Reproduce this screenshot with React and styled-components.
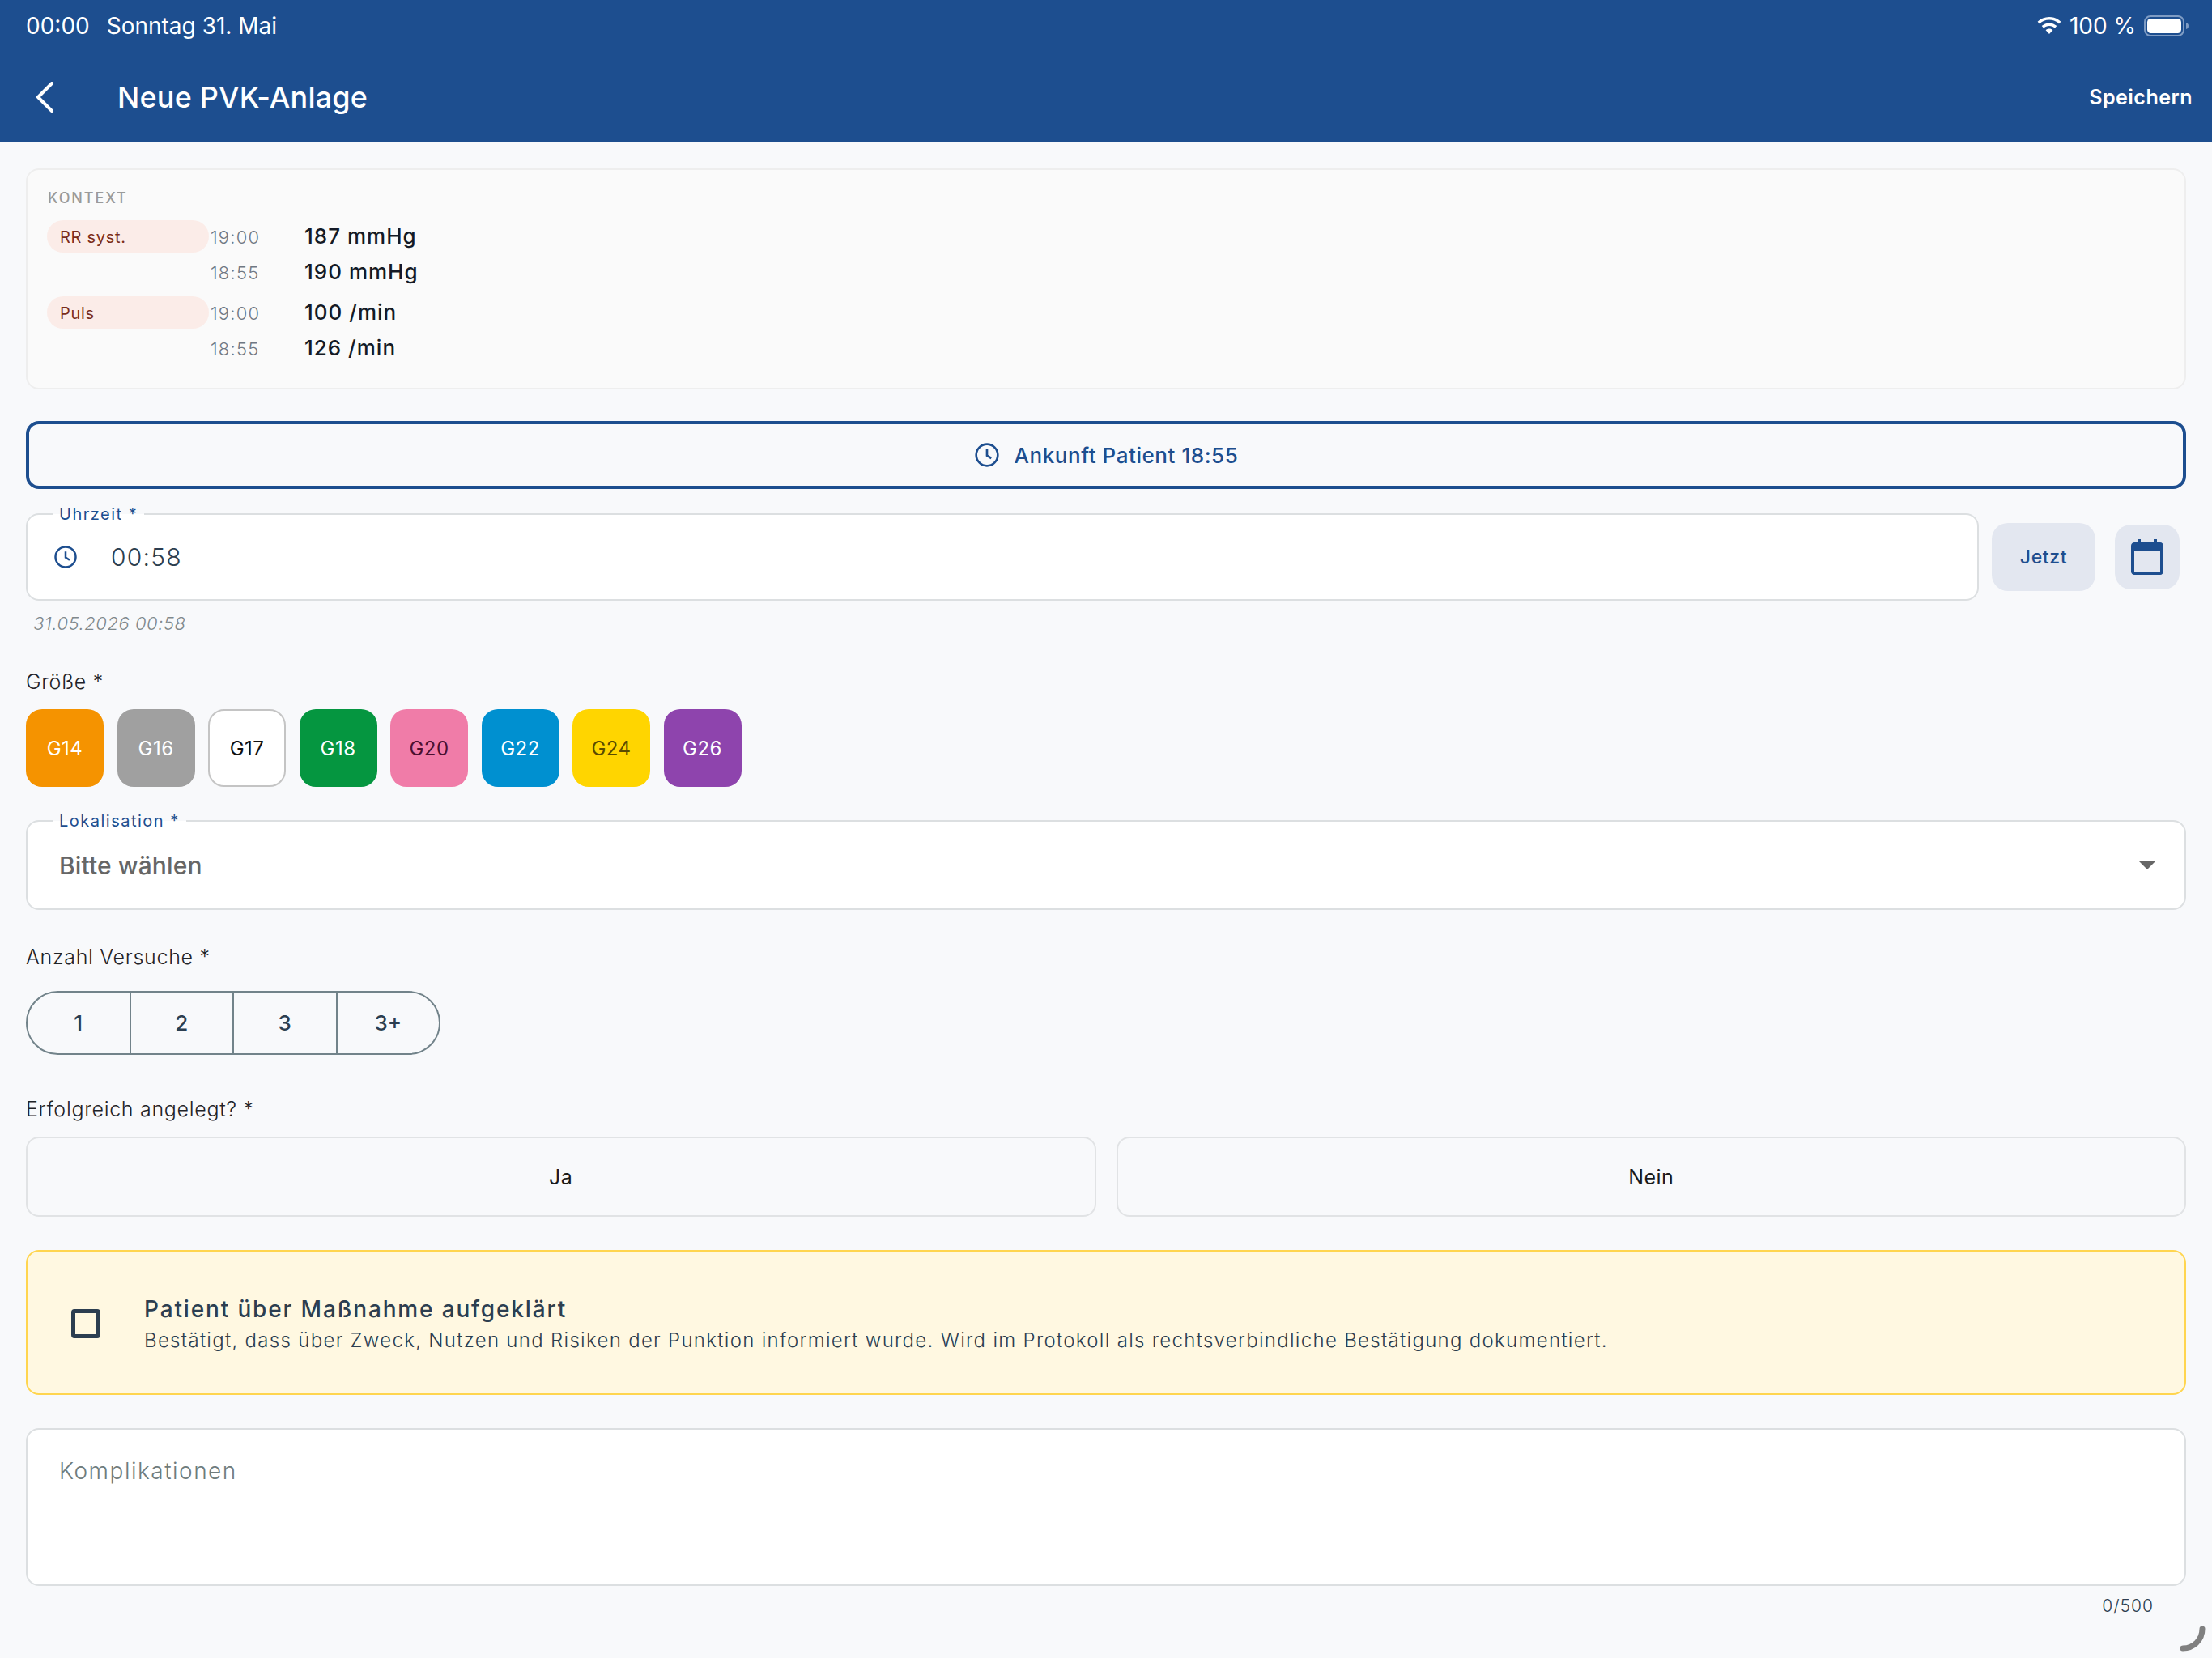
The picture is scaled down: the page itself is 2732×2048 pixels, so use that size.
import React from "react";
import styled, { createGlobalStyle } from "styled-components";

const GAUGES = [
  { name: "G14", bg: "#f59300", fg: "#ffffff" },
  { name: "G16", bg: "#a0a0a0", fg: "#ffffff" },
  { name: "G17", bg: "#ffffff", fg: "#111111", border: "#c4c4c4" },
  { name: "G18", bg: "#059640", fg: "#ffffff" },
  { name: "G20", bg: "#f07ca8", fg: "#4a1030" },
  { name: "G22", bg: "#0090d0", fg: "#ffffff" },
  { name: "G24", bg: "#ffd500", fg: "#5a4a00" },
  { name: "G26", bg: "#8e44ad", fg: "#ffffff" },
];

const VITALS = [
  {
    label: "RR syst.",
    rows: [
      ["19:00", "187 mmHg"],
      ["18:55", "190 mmHg"],
    ],
  },
  {
    label: "Puls",
    rows: [
      ["19:00", "100 /min"],
      ["18:55", "126 /min"],
    ],
  },
];

function ClockIcon({ size }) {
  return (
    <svg width={size} height={size} viewBox="0 0 24 24" fill="none" stroke="#1d4e8f" strokeWidth="2">
      <circle cx="12" cy="12" r="10" />
      <path d="M12 6.5V12.5L16 15" />
    </svg>
  );
}

export default function App() {
  return (
    <Page>
      <GlobalStyle />
      <Header>
        <StatusBar>
          <StatusGroup>
            <span>00:00</span>
            <span>Sonntag 31. Mai</span>
          </StatusGroup>
          <StatusRight>
            <svg width="30" height="22" viewBox="0 0 30 22" fill="#fff">
              <path d="M15 0C9.4 0 4.4 2.2.6 5.8L3 8.4C6.1 5.4 10.4 3.6 15 3.6s8.900 1.800 12 4.800l2.400-2.600C25.600 2.200 20.600 0 15 0z" />
              <path d="M15 7.400c-3.600 0-6.900 1.400-9.300 3.700l2.500 2.600c1.800-1.700 4.200-2.700 6.800-2.700s5 1 6.800 2.700l2.500-2.600c-2.400-2.300-5.700-3.700-9.300-3.700z" />
              <path d="M15 14.600c-1.700 0-3.200.7-4.400 1.700L15 21l4.400-4.700c-1.200-1-2.700-1.700-4.400-1.700z" />
            </svg>
            <span>100 %</span>
            <svg width="56" height="26" viewBox="0 0 56 26">
              <rect x="1" y="1" width="48" height="24" rx="7" fill="none" stroke="#7f9cc4" strokeWidth="2" />
              <rect x="4" y="4" width="42" height="18" rx="4.500" fill="#fff" />
              <path d="M52 9c2 .5 3 2 3 4s-1 3.500-3 4z" fill="#7f9cc4" />
            </svg>
          </StatusRight>
        </StatusBar>
        <TitleBar>
          <BackButton>
            <svg width="26" height="38" viewBox="0 0 26 38" fill="none" stroke="#fff" strokeWidth="4" strokeLinecap="round" strokeLinejoin="round">
              <path d="M21 2L4 19L21 36" />
            </svg>
          </BackButton>
          <Title>Neue PVK-Anlage</Title>
          <SaveAction>Speichern</SaveAction>
        </TitleBar>
      </Header>

      <Content>
        <ContextCard>
          <ContextHeading>KONTEXT</ContextHeading>
          {VITALS.map((vital) => (
            <VitalGroup key={vital.label}>
              <VitalChip>{vital.label}</VitalChip>
              <VitalRows>
                {vital.rows.map(([time, value]) => (
                  <VitalRow key={time}>
                    <VitalTime>{time}</VitalTime>
                    <VitalValue>{value}</VitalValue>
                  </VitalRow>
                ))}
              </VitalRows>
            </VitalGroup>
          ))}
        </ContextCard>

        <ArrivalButton>
          <ClockIcon size={32} />
          <span>Ankunft Patient 18:55</span>
        </ArrivalButton>

        <TimeRow>
          <TimeField>
            <FloatingLabel>Uhrzeit *</FloatingLabel>
            <ClockIcon size={30} />
            <TimeValue>00:58</TimeValue>
          </TimeField>
          <NowButton>Jetzt</NowButton>
          <CalendarButton>
            <svg width="40" height="44" viewBox="0 0 40 44" fill="#1d4e8f">
              <path d="M8 0h4v4h16V0h4v4h4c2.200 0 4 1.800 4 4v32c0 2.200-1.800 4-4 4H4c-2.200 0-4-1.800-4-4V8c0-2.200 1.800-4 4-4h4zM4 14v26h32V14z" />
            </svg>
          </CalendarButton>
        </TimeRow>
        <TimeHint>31.05.2026 00:58</TimeHint>

        <SectionLabel $top={41}>Größe *</SectionLabel>
        <GaugeRow>
          {GAUGES.map((gauge) => (
            <GaugeChip key={gauge.name} $bg={gauge.bg} $fg={gauge.fg} $border={gauge.border}>
              {gauge.name}
            </GaugeChip>
          ))}
        </GaugeRow>

        <SelectField>
          <FloatingLabel>Lokalisation *</FloatingLabel>
          <SelectValue>Bitte wählen</SelectValue>
          <SelectArrow />
        </SelectField>

        <SectionLabel $top={41}>Anzahl Versuche *</SectionLabel>
        <Segments>
          {["1", "2", "3", "3+"].map((count) => (
            <Segment key={count}>{count}</Segment>
          ))}
        </Segments>

        <SectionLabel $top={50}>Erfolgreich angelegt? *</SectionLabel>
        <ChoiceRow>
          <ChoiceButton>Ja</ChoiceButton>
          <ChoiceButton>Nein</ChoiceButton>
        </ChoiceRow>

        <ConsentCard>
          <CheckBox />
          <ConsentText>
            <ConsentTitle>Patient über Maßnahme aufgeklärt</ConsentTitle>
            <ConsentBody>
              Bestätigt, dass über Zweck, Nutzen und Risiken der Punktion informiert wurde. Wird im
              Protokoll als rechtsverbindliche Bestätigung dokumentiert.
            </ConsentBody>
          </ConsentText>
        </ConsentCard>

        <TextArea>Komplikationen</TextArea>
        <Counter>0/500</Counter>
      </Content>

      <ResizeHandle>
        <svg width="32" height="32" viewBox="0 0 32 32" fill="none" stroke="#808080" strokeWidth="7" strokeLinecap="round">
          <path d="M28 4C28 17 18 28 4 28" />
        </svg>
      </ResizeHandle>
    </Page>
  );
}

const GlobalStyle = createGlobalStyle`
  html, body {
    margin: 0;
    padding: 0;
    background: #f8f9fb;
  }
  * {
    box-sizing: border-box;
  }
`;

const Page = styled.div`
  position: relative;
  width: 2732px;
  height: 2048px;
  overflow: hidden;
  background: #f8f9fb;
  font-family: Inter, "Noto Sans", sans-serif;
  color: #1a1a1a;
`;

const Header = styled.header`
  height: 176px;
  background: #1d4e8f;
  color: #fff;
`;

const StatusBar = styled.div`
  height: 64px;
  padding: 0 28px 0 32px;
  display: flex;
  align-items: center;
  justify-content: space-between;
  font-size: 28px;
`;

const StatusGroup = styled.div`
  display: flex;
  gap: 21px;
`;

const StatusRight = styled.div`
  display: flex;
  align-items: center;
  gap: 10px;
`;

const TitleBar = styled.div`
  height: 112px;
  padding: 0 24px 0 43px;
  display: flex;
  align-items: center;
`;

const BackButton = styled.div`
  width: 102px;
  display: flex;
  align-items: center;
`;

const Title = styled.h1`
  margin: 0;
  flex: 1;
  font-size: 36px;
  font-weight: 500;
  letter-spacing: 0.2px;
`;

const SaveAction = styled.div`
  font-size: 25px;
  font-weight: 600;
  letter-spacing: 0.5px;
`;

const Content = styled.main`
  padding: 32px 32px 0;
`;

const ContextCard = styled.section`
  height: 273px;
  padding: 24px 24px 0;
  background: #fafafa;
  border: 2px solid #eeeeee;
  border-radius: 16px;
`;

const ContextHeading = styled.div`
  padding-left: 1px;
  font-size: 18px;
  font-weight: 500;
  line-height: 22px;
  letter-spacing: 1.9px;
  color: #9a9a9a;
  margin-bottom: 16px;
`;

const VitalGroup = styled.div`
  display: flex;
  margin-bottom: 9px;
`;

const VitalChip = styled.div`
  width: 200px;
  height: 40px;
  padding: 2px 16px 0;
  display: flex;
  align-items: center;
  border-radius: 20px;
  background: #fbece8;
  color: #7b2d1a;
  font-size: 20px;
  letter-spacing: 0.7px;
`;

const VitalRows = styled.div`
  display: flex;
  flex-direction: column;
  margin-top: -3px;
`;

const VitalRow = styled.div`
  display: flex;
  align-items: center;
  height: 44px;
`;

const VitalTime = styled.span`
  width: 118px;
  padding-left: 2px;
  margin-top: 4px;
  font-size: 22px;
  font-weight: 300;
  color: #6f7884;
  letter-spacing: 1.2px;
`;

const VitalValue = styled.span`
  font-size: 26px;
  font-weight: 500;
  color: #141a26;
  letter-spacing: 1px;
`;

const ArrivalButton = styled.div`
  margin-top: 39px;
  height: 84px;
  display: flex;
  align-items: center;
  justify-content: center;
  gap: 18px;
  border: 4px solid #1d4e8f;
  border-radius: 16px;
  color: #1d4e8f;
  font-size: 26px;
  font-weight: 500;
  letter-spacing: 0.55px;
`;

const TimeRow = styled.div`
  margin-top: 30px;
  display: flex;
  align-items: center;
`;

const fieldBox = `
  position: relative;
  display: flex;
  align-items: center;
  background: #fff;
  border: 2px solid #dcdfe1;
  border-radius: 16px;
`;

const TimeField = styled.div`
  ${fieldBox}
  width: 2412px;
  height: 108px;
  padding-left: 32px;
`;

const FloatingLabel = styled.label`
  position: absolute;
  left: 31px;
  top: -13px;
  padding: 0 8px;
  font-size: 20px;
  line-height: 24px;
  letter-spacing: 1.5px;
  color: #1d4e8f;
  background: linear-gradient(#f8f9fb 50%, #fff 50%);
`;

const TimeValue = styled.span`
  margin-left: 41px;
  font-size: 30px;
  font-weight: 300;
  letter-spacing: 1.2px;
  color: #2c3e50;
`;

const NowButton = styled.div`
  margin-left: 16px;
  width: 128px;
  height: 84px;
  display: flex;
  align-items: center;
  justify-content: center;
  border-radius: 20px;
  background: #e3e7f0;
  color: #1d4e8f;
  font-size: 23px;
  font-weight: 500;
  letter-spacing: 0.6px;
`;

const CalendarButton = styled.div`
  margin-left: 24px;
  width: 80px;
  height: 80px;
  display: flex;
  align-items: center;
  justify-content: center;
  border-radius: 20px;
  background: #e3e7f0;
`;

const TimeHint = styled.div`
  margin-top: 14px;
  padding-left: 9px;
  font-size: 22px;
  line-height: 28px;
  font-style: italic;
  font-weight: 300;
  letter-spacing: 0.55px;
  color: #7f888c;
`;

const SectionLabel = styled.div`
  margin-top: ${(p) => p.$top}px;
  font-size: 25px;
  line-height: 34px;
  letter-spacing: 0.7px;
  font-weight: 350;
  color: #1f2328;
`;

const GaugeRow = styled.div`
  margin-top: 17px;
  display: flex;
  gap: 16.5px;
`;

const GaugeChip = styled.div`
  width: 96px;
  height: 96px;
  display: flex;
  align-items: center;
  justify-content: center;
  border-radius: 20px;
  background: ${(p) => p.$bg};
  color: ${(p) => p.$fg};
  border: ${(p) => (p.$border ? `2px solid ${p.$border}` : "none")};
  font-size: 24px;
  font-weight: 400;
  letter-spacing: 0.5px;
`;

const SelectField = styled.div`
  ${fieldBox}
  margin-top: 41px;
  height: 111px;
  padding: 0 36px 0 39px;
  justify-content: space-between;
`;

const SelectValue = styled.span`
  font-size: 30px;
  font-weight: 500;
  letter-spacing: 0.1px;
  color: #666666;
`;

const SelectArrow = styled.span`
  width: 0;
  height: 0;
  border-left: 10px solid transparent;
  border-right: 10px solid transparent;
  border-top: 10px solid #666666;
`;

const Segments = styled.div`
  margin-top: 25px;
  width: 512px;
  height: 79px;
  display: flex;
  border: 2px solid #72838a;
  border-radius: 40px;
`;

const Segment = styled.div`
  flex: 1;
  display: flex;
  align-items: center;
  justify-content: center;
  font-size: 26px;
  font-weight: 500;
  color: #2c3e50;
  & + & {
    border-left: 2px solid #72838a;
  }
`;

const ChoiceRow = styled.div`
  margin-top: 17px;
  display: flex;
  gap: 25px;
`;

const ChoiceButton = styled.div`
  flex: 1;
  height: 99px;
  display: flex;
  align-items: center;
  justify-content: center;
  border: 2px solid #e1e3e5;
  border-radius: 16px;
  font-size: 25px;
  letter-spacing: 0.5px;
  color: #1a1a1a;
`;

const ConsentCard = styled.section`
  margin-top: 41px;
  height: 179px;
  padding: 2px 0 0 54px;
  display: flex;
  align-items: center;
  gap: 54px;
  background: #fff8e1;
  border: 2px solid #ffd54f;
  border-radius: 16px;
`;

const CheckBox = styled.span`
  flex: none;
  width: 36px;
  height: 36px;
  border: 5px solid #2c3e50;
  border-radius: 4px;
`;

const ConsentText = styled.div`
  display: flex;
  flex-direction: column;
  gap: 7px;
`;

const ConsentTitle = styled.div`
  font-size: 28px;
  font-weight: 500;
  letter-spacing: 1.85px;
  color: #2c3e50;
`;

const ConsentBody = styled.div`
  font-size: 24px;
  font-weight: 300;
  letter-spacing: 1.3px;
  color: #2c3e50;
`;

const TextArea = styled.div`
  margin-top: 41px;
  height: 195px;
  padding: 34px 39px 0;
  background: #fff;
  border: 2px solid #dcdfe1;
  border-radius: 16px;
  font-size: 28px;
  font-weight: 300;
  letter-spacing: 1.5px;
  color: #6f7c7d;
`;

const Counter = styled.div`
  margin-top: 12px;
  padding-right: 40px;
  text-align: right;
  font-size: 21px;
  font-weight: 300;
  letter-spacing: 1px;
  color: #2c3e50;
`;

const ResizeHandle = styled.div`
  position: absolute;
  right: 8px;
  bottom: 8px;
  width: 32px;
  height: 32px;
`;
